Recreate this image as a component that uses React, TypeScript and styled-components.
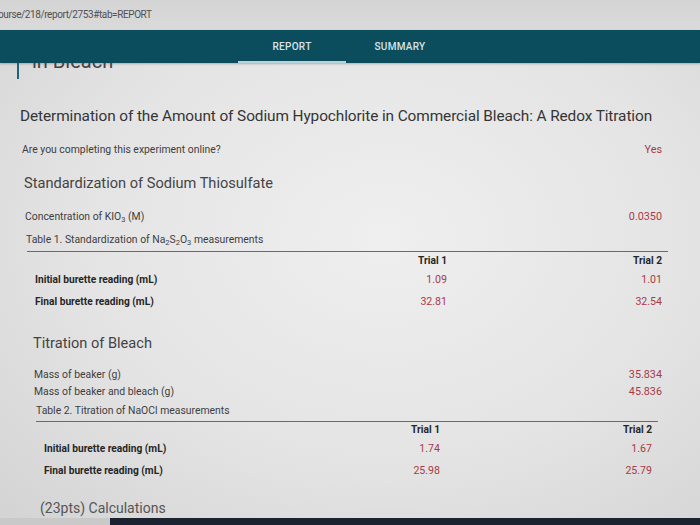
import styled, { createGlobalStyle } from 'styled-components';

const GlobalStyle = createGlobalStyle`
  html, body { margin: 0; padding: 0; }
  body { font-family: Roboto, "Liberation Sans", sans-serif; background: #dcdcdc; }
`;

const Page = styled.div`
  width: 700px;
  height: 525px;
  overflow: hidden;
  display: flex;
  flex-direction: column;
  background: radial-gradient(ellipse at 55% 45%, #efefef 0%, #e4e4e4 55%, #d3d3d3 100%);
`;

const UrlBar = styled.div`
  height: 30px;
  box-sizing: border-box;
  padding-top: 9px;
  background: linear-gradient(#d4d4d4, #dadada);
  font-size: 10px;
  color: #505050;
  letter-spacing: -0.4px;
  margin-left: -2px;
`;

const NavBar = styled.nav`
  height: 33px;
  display: flex;
  padding-left: 238px;
  background: #0b4c5d;
  box-shadow: 0 1px 2px rgba(0, 0, 0, 0.25);
`;

const Tab = styled.div<{ $active?: boolean }>`
  width: 108px;
  display: flex;
  align-items: center;
  justify-content: center;
  box-sizing: border-box;
  padding-top: 2px;
  font-size: 10px;
  font-weight: 500;
  letter-spacing: 0.3px;
  color: #d8e4e7;
  border-bottom: 2px solid ${p => (p.$active ? '#b9d3da' : 'transparent')};
`;

const ClippedHeading = styled.div`
  height: 16px;
  margin-left: 17px;
  padding-left: 13px;
  border-left: 2px solid #1e6677;
  overflow: hidden;
  font-size: 20px;
  color: #444;
  line-height: 20px;

  span { display: block; margin-top: -12px; }
`;

const Content = styled.main`
  display: flex;
  flex-direction: column;
  padding-right: 38px;
`;

const Title = styled.h1`
  margin: 27px 0 0 20px;
  font-size: 15.4px;
  line-height: 20px;
  font-weight: 400;
  color: #353535;
  letter-spacing: -0.1px;
  white-space: nowrap;
`;

const Field = styled.div<{ $indent: number; $top: number; $height?: number }>`
  display: flex;
  justify-content: space-between;
  align-items: center;
  margin-top: ${p => p.$top}px;
  padding-left: ${p => p.$indent}px;
  height: ${p => p.$height ?? 14}px;
  font-size: 10.4px;
  color: #3e3e3e;
`;

const Value = styled.span`
  color: #a83a48;
  font-size: 10.8px;
`;

const SectionHeading = styled.h2<{ $indent: number; $top: number }>`
  margin: ${p => p.$top}px 0 0 ${p => p.$indent}px;
  font-size: 14.6px;
  line-height: 20px;
  font-weight: 400;
  color: #444;
`;

const Sub = styled.sub`
  font-size: 7.5px;
  vertical-align: -2px;
  line-height: 0;
`;

const Table = styled.div<{ $indent: number; $top: number; $right: number; $col2: number }>`
  margin: ${p => p.$top}px ${p => p.$right}px 0 ${p => p.$indent}px;
  border-top: 1px solid #6a6a6a;
  display: grid;
  grid-template-columns: 1fr 60px ${p => p.$col2}px;
  padding: 0 6px 0 8px;
  font-size: 10.2px;
`;

const HeadCell = styled.div<{ $h: number }>`
  height: ${p => p.$h}px;
  display: flex;
  align-items: center;
  justify-content: flex-end;
  font-weight: 700;
  color: #262626;
`;

const RowLabel = styled.div`
  height: 22px;
  display: flex;
  align-items: center;
  font-weight: 700;
  color: #262626;
`;

const RowValue = styled.div`
  height: 22px;
  display: flex;
  align-items: center;
  justify-content: flex-end;
  color: #a83a48;
  font-size: 10.6px;
`;

const Calculations = styled.h3`
  margin: 18px 0 0 40px;
  font-size: 14px;
  line-height: 18px;
  font-weight: 400;
  color: #555;
`;

const Bezel = styled.div`
  margin-top: auto;
  height: 7px;
  display: flex;
  background: #c9c9c9;
`;

const Taskbar = styled.div`
  margin-left: 110px;
  flex: 1;
  background: #1b2330;
`;

type Row = { label: string; t1: string; t2: string };

const TrialTable = ({ rows, indent, top, right, col2, headH }: {
  rows: Row[]; indent: number; top: number; right: number; col2: number; headH: number;
}) => (
  <Table $indent={indent} $top={top} $right={right} $col2={col2}>
    <div />
    <HeadCell $h={headH}>Trial 1</HeadCell>
    <HeadCell $h={headH}>Trial 2</HeadCell>
    {rows.map(r => [
      <RowLabel key={r.label + 'l'}>{r.label}</RowLabel>,
      <RowValue key={r.label + '1'}>{r.t1}</RowValue>,
      <RowValue key={r.label + '2'}>{r.t2}</RowValue>,
    ])}
  </Table>
);

export default function App() {
  return (
    <>
      <GlobalStyle />
      <Page>
        <UrlBar>ourse/218/report/2753#tab=REPORT</UrlBar>
        <NavBar>
          <Tab $active>REPORT</Tab>
          <Tab>SUMMARY</Tab>
        </NavBar>
        <ClippedHeading><span>in Bleach</span></ClippedHeading>

        <Content>
          <Title>Determination of the Amount of Sodium Hypochlorite in Commercial Bleach: A Redox Titration</Title>
          <Field $indent={22} $top={16}>
            <span>Are you completing this experiment online?</span>
            <Value>Yes</Value>
          </Field>

          <SectionHeading $indent={24} $top={17}>Standardization of Sodium Thiosulfate</SectionHeading>
          <Field $indent={25} $top={16}>
            <span>Concentration of KIO<Sub>3</Sub> (M)</span>
            <Value>0.0350</Value>
          </Field>
          <Field $indent={26} $top={9}>
            <span>Table 1. Standardization of Na<Sub>2</Sub>S<Sub>2</Sub>O<Sub>3</Sub> measurements</span>
          </Field>
          <TrialTable
            indent={27} top={5} right={-6} col2={215} headH={16}
            rows={[
              { label: 'Initial burette reading (mL)', t1: '1.09', t2: '1.01' },
              { label: 'Final burette reading (mL)', t1: '32.81', t2: '32.54' },
            ]}
          />

          <SectionHeading $indent={33} $top={21}>Titration of Bleach</SectionHeading>
          <Field $indent={34} $top={13} $height={17}>
            <span>Mass of beaker (g)</span>
            <Value>35.834</Value>
          </Field>
          <Field $indent={34} $top={0} $height={17}>
            <span>Mass of beaker and bleach (g)</span>
            <Value>45.836</Value>
          </Field>
          <Field $indent={36} $top={3}>
            <span>Table 2. Titration of NaOCl measurements</span>
          </Field>
          <TrialTable
            indent={36} top={4} right={4} col2={212} headH={15}
            rows={[
              { label: 'Initial burette reading (mL)', t1: '1.74', t2: '1.67' },
              { label: 'Final burette reading (mL)', t1: '25.98', t2: '25.79' },
            ]}
          />

          <Calculations>(23pts) Calculations</Calculations>
        </Content>
        <Bezel><Taskbar /></Bezel>
      </Page>
    </>
  );
}
